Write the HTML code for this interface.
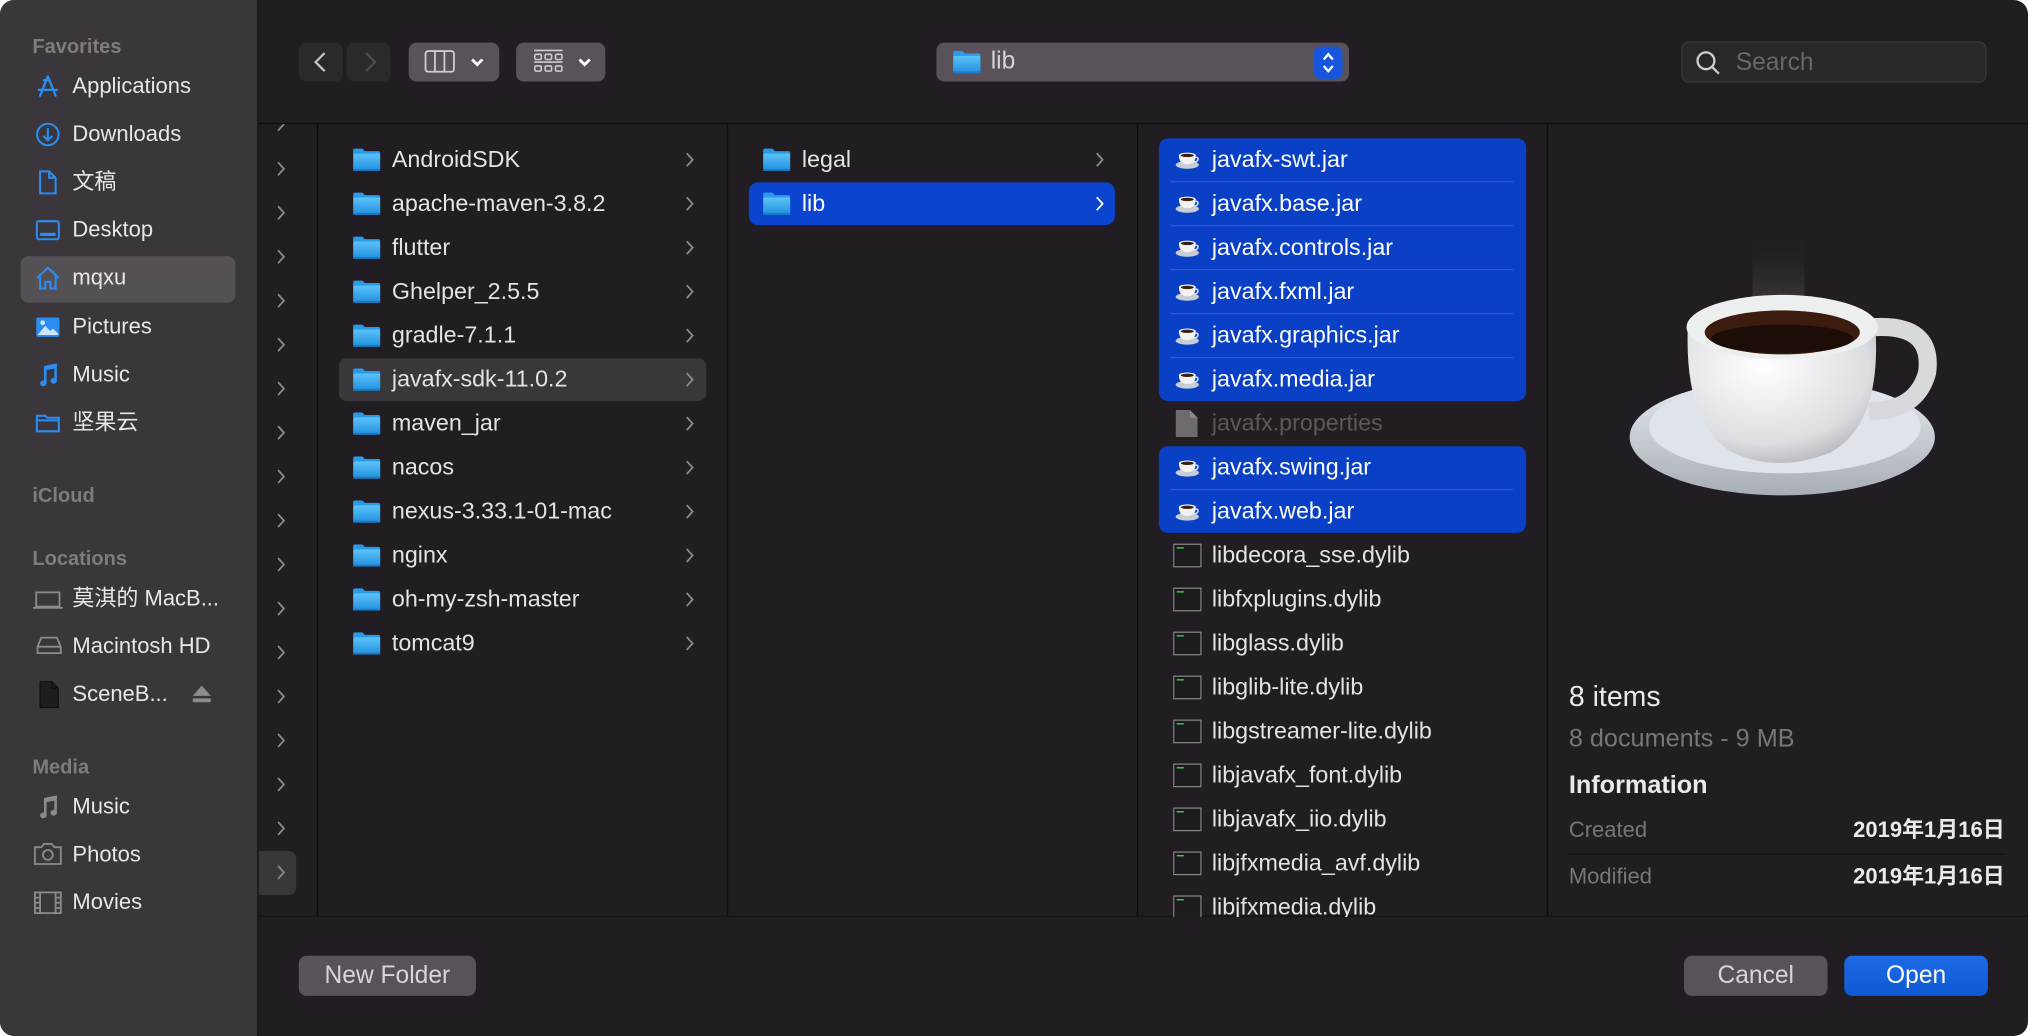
<!DOCTYPE html>
<html><head><meta charset="utf-8">
<style>
html,body{margin:0;padding:0;background:#fff;width:2028px;height:1036px;overflow:hidden}
#w{position:absolute;left:0;top:0;width:1568px;height:801px;transform:scale(1.29337);transform-origin:0 0;background:#211d23;border-radius:11px;overflow:hidden;font-family:"Liberation Sans","Noto Sans CJK SC",sans-serif;color:#e6e4e6}
.a{position:absolute}
#side{left:0;top:0;width:199px;height:801px;background:#3a363b;border-right:1px solid #0e0c0f}
.sh{position:absolute;left:25px;font-size:15.5px;font-weight:bold;color:#807b81}
.si{position:absolute;left:56px;font-size:17px;color:#e8e6e8;line-height:20px}
.ic{position:absolute;left:27px}
.row{position:absolute;height:34px;line-height:34px;font-size:18px;color:#e4e2e4;white-space:nowrap}
.fold{position:absolute;top:8px}
.vl{position:absolute;top:96px;height:612px;width:1px;background:#0e0c0f}
.btn{position:absolute;border-radius:6px;background:#5a525b;color:#d8d4d8;font-size:19px;text-align:center;line-height:31px;height:31px}
.sel{position:absolute;background:#0a40c5;border-radius:7px}
.sep{position:absolute;height:1px;background:#2c58d2}
.lv{position:absolute;line-height:20px;font-size:17px}
</style></head><body>
<div id="w">
<svg width="0" height="0" style="position:absolute"><defs>
<linearGradient id="fg" x1="0" y1="0" x2="0" y2="1"><stop offset="0" stop-color="#5cc3f7"/><stop offset="1" stop-color="#1f8fe0"/></linearGradient>
<symbol id="folder" viewBox="0 0 24 20"><path d="M1 2.5Q1 1 2.5 1H8.5L10.5 3H21.5Q23 3 23 4.5V6H1Z" fill="#2a9be8"/><rect x="1" y="5" width="22" height="14" rx="1.3" fill="url(#fg)"/><rect x="1" y="17.5" width="22" height="1.5" fill="#1a7cc8"/></symbol>
<symbol id="cup" viewBox="0 0 20 16"><ellipse cx="10" cy="12.5" rx="9" ry="3" fill="#c8ccd4"/><path d="M3.5 5Q3.5 12 10 12Q16.5 12 16.5 5Z" fill="#f2f2f2"/><path d="M16 6.5Q19 6.5 18 9Q17 10.5 15 10" stroke="#ddd" stroke-width="1.2" fill="none"/><ellipse cx="10" cy="5" rx="6.5" ry="2" fill="#f6f6f6"/><ellipse cx="10" cy="5.2" rx="5" ry="1.3" fill="#3a1e10"/></symbol>
<symbol id="dy" viewBox="0 0 24 20"><rect x="0.5" y="0.5" width="23" height="19" fill="#1c1c1c" stroke="#8a8a8a"/><rect x="3" y="3" width="6" height="1.2" fill="#3ad04a"/></symbol>
</defs></svg>

<div id="side" class="a">
<div class="sh" style="top:28px">Favorites</div>
<div class="a" style="left:16px;top:198px;width:166px;height:36px;background:#555056;border-radius:6px"></div>
<svg class="ic" style="top:57px" width="20" height="20" viewBox="0 0 20 20" fill="none" stroke="#2b8cf2" stroke-width="1.8" stroke-linecap="round"><path d="M10 2L4 17M10 2L16 17M3 12.5H17M7 5L11 5"/></svg>
<div class="si" style="top:57px">Applications</div>
<svg class="ic" style="top:94px" width="20" height="20" viewBox="0 0 20 20" fill="none" stroke="#2b8cf2" stroke-width="1.6"><circle cx="10" cy="10" r="8.3"/><path d="M10 5V14M6.5 11L10 14.5L13.5 11"/></svg>
<div class="si" style="top:94px">Downloads</div>
<svg class="ic" style="top:131px" width="20" height="20" viewBox="0 0 20 20" fill="none" stroke="#2b8cf2" stroke-width="1.6"><path d="M4 1.5H11L16 6.5V18.5H4Z M11 1.5V6.5H16"/></svg>
<div class="si" style="top:131px">文稿</div>
<svg class="ic" style="top:168px" width="20" height="20" viewBox="0 0 20 20" fill="none" stroke="#2b8cf2" stroke-width="1.6"><rect x="1.5" y="3" width="17" height="14" rx="1.5"/><rect x="4" y="12" width="12" height="2.5" fill="#2b8cf2" stroke="none"/></svg>
<div class="si" style="top:168px">Desktop</div>
<svg class="ic" style="top:205px" width="20" height="20" viewBox="0 0 20 20" fill="none" stroke="#2b8cf2" stroke-width="1.6"><path d="M1.5 10L10 2L18.5 10M4 8V18H8V13H12V18H16V8M14 4V6"/></svg>
<div class="si" style="top:205px">mqxu</div>
<svg class="ic" style="top:243px" width="20" height="20" viewBox="0 0 20 20"><rect x="1" y="2.5" width="18" height="15" rx="1.5" fill="#2b8cf2"/><path d="M2 16L8 9L12 13L14 11L18 15V16Z" fill="#cfe4ff"/><circle cx="6" cy="6.5" r="1.8" fill="#cfe4ff"/></svg>
<div class="si" style="top:243px">Pictures</div>
<svg class="ic" style="top:280px" width="20" height="20" viewBox="0 0 20 20" fill="#2b8cf2"><path d="M7 3L17 1V14.5A2.5 2.2 0 1 1 15 12.3V5L9 6.2V16.5A2.5 2.2 0 1 1 7 14.3Z"/></svg>
<div class="si" style="top:280px">Music</div>
<svg class="ic" style="top:317px" width="20" height="20" viewBox="0 0 20 20" fill="none" stroke="#2b8cf2" stroke-width="1.6"><path d="M1.5 4.5H8L9.5 6H18.5V16.5H1.5Z M1.5 8H18.5"/></svg>
<div class="si" style="top:317px">坚果云</div>

<div class="sh" style="top:375px">iCloud</div>
<div class="sh" style="top:424px">Locations</div>
<svg class="ic" style="top:455px;left:25px" width="24" height="18" viewBox="0 0 24 18" fill="none" stroke="#8d898e" stroke-width="1.4"><rect x="3" y="3" width="18" height="11"/><path d="M0.5 15H23.5"/></svg>
<div class="si" style="top:453px">莫淇的 MacB...</div>
<svg class="ic" style="top:491px;left:27px" width="22" height="16" viewBox="0 0 22 16" fill="none" stroke="#8d898e" stroke-width="1.4"><path d="M2 9L5 2H17L20 9V14H2Z M2 9H20"/></svg>
<div class="si" style="top:490px">Macintosh HD</div>
<svg class="ic" style="top:526px;left:30px" width="16" height="22" viewBox="0 0 16 22"><path d="M1 1H10L15 6V21H1Z" fill="#1e1c1f" stroke="#111" stroke-width="1"/><path d="M10 1V6H15" fill="none" stroke="#111"/></svg>
<div class="si" style="top:527px">SceneB...</div>
<svg class="a" style="left:148px;top:529px" width="16" height="15" viewBox="0 0 16 15" fill="#8d898e"><path d="M8 1L15 9H1Z"/><rect x="1" y="11" width="14" height="3" rx="1"/></svg>
<div class="sh" style="top:585px">Media</div>
<svg class="ic" style="top:614px" width="20" height="20" viewBox="0 0 20 20" fill="#8d898e"><path d="M7 3L17 1V14.5A2.5 2.2 0 1 1 15 12.3V5L9 6.2V16.5A2.5 2.2 0 1 1 7 14.3Z"/></svg>
<div class="si" style="top:614px">Music</div>
<svg class="ic" style="top:651px;left:26px" width="22" height="18" viewBox="0 0 22 18" fill="none" stroke="#8d898e" stroke-width="1.4"><path d="M1 4H6L8 1.5H14L16 4H21V17H1Z"/><circle cx="11" cy="10" r="3.8"/></svg>
<div class="si" style="top:651px">Photos</div>
<svg class="ic" style="top:689px;left:26px" width="22" height="18" viewBox="0 0 22 18" fill="none" stroke="#8d898e" stroke-width="1.4"><rect x="1" y="1" width="20" height="16"/><path d="M5 1V17M17 1V17M1 5H5M1 9H5M1 13H5M17 5H21M17 9H21M17 13H21"/></svg>
<div class="si" style="top:688px">Movies</div>
</div>

<div class="a" style="left:231px;top:33px;width:34px;height:30px;background:#2c292d;border-radius:6px"></div>
<svg class="a" style="left:241px;top:39px" width="14" height="18" viewBox="0 0 14 18" fill="none" stroke="#c9c6c9" stroke-width="1.7"><path d="M10 2L3 9L10 16"/></svg>
<div class="a" style="left:268px;top:33px;width:34px;height:30px;background:#2c292d;border-radius:6px"></div>
<svg class="a" style="left:279px;top:39px" width="14" height="18" viewBox="0 0 14 18" fill="none" stroke="#4f4c50" stroke-width="1.7"><path d="M4 2L11 9L4 16"/></svg>
<div class="a" style="left:316px;top:33px;width:70px;height:30px;background:#5a525b;border-radius:6px"></div>
<svg class="a" style="left:328px;top:38px" width="56" height="20" viewBox="0 0 56 20" fill="none" stroke="#cfcbcf" stroke-width="1.4"><rect x="1" y="1.5" width="22" height="16" rx="2"/><path d="M8.3 1.5V17.5M15.6 1.5V17.5"/><path d="M37 8L41 12L45 8" stroke="#fff" stroke-width="2.2"/></svg>
<div class="a" style="left:399px;top:33px;width:69px;height:30px;background:#5a525b;border-radius:6px"></div>
<svg class="a" style="left:412px;top:38px" width="52" height="20" viewBox="0 0 52 20" fill="none" stroke="#cfcbcf" stroke-width="1.2"><path d="M1 1H23M1 10H23"/><rect x="1.5" y="4" width="5" height="4" rx="1"/><rect x="9.5" y="4" width="5" height="4" rx="1"/><rect x="17.5" y="4" width="5" height="4" rx="1"/><rect x="1.5" y="13" width="5" height="4" rx="1"/><rect x="9.5" y="13" width="5" height="4" rx="1"/><rect x="17.5" y="13" width="5" height="4" rx="1"/><path d="M36 8L40 12L44 8" stroke="#fff" stroke-width="2.2"/></svg>

<div class="a" style="left:724px;top:33px;width:319px;height:30px;background:#5a525b;border-radius:6px"></div>
<svg class="a" style="left:736px;top:38px;width:23px;height:20px"><use href="#folder"/></svg>
<div class="a" style="left:766px;top:36px;font-size:19px;color:#d6d2d6;line-height:24px">lib</div>
<div class="a" style="left:1016px;top:36px;width:22px;height:25px;background:#1657de;border-radius:5px"></div>
<svg class="a" style="left:1020px;top:38px" width="14" height="21" viewBox="0 0 14 21" fill="none" stroke="#fff" stroke-width="1.8"><path d="M3.5 8L7 4L10.5 8M3.5 13L7 17L10.5 13"/></svg>

<div class="a" style="left:1300px;top:32px;width:234px;height:30px;background:#2a262b;border:1px solid #3a363b;border-radius:6px"></div>
<svg class="a" style="left:1310px;top:38px" width="22" height="22" viewBox="0 0 22 22" fill="none" stroke="#d0ccd0" stroke-width="1.8"><circle cx="9" cy="9" r="6.5"/><path d="M13.8 13.8L19 19"/></svg>
<div class="a" style="left:1342px;top:37px;font-size:19px;color:#6b666c;line-height:24px">Search</div>

<div class="a" style="left:200px;top:95px;width:1368px;height:1px;background:#0e0c0f"></div>
<div class="a" style="left:200px;top:708px;width:1368px;height:1px;background:#141215"></div>

<div class="vl" style="left:245px"></div>
<div class="vl" style="left:562px"></div>
<div class="vl" style="left:879px"></div>
<div class="vl" style="left:1196px"></div>

<div class="a" style="left:200px;top:658px;width:29px;height:34px;background:#3a363b;border-radius:0 6px 6px 0"></div>
<svg class="a" style="left:213px;top:96px" width="8" height="6" viewBox="0 0 8 6" fill="none" stroke="#8d8a8e" stroke-width="1.4"><path d="M6.5 0L2 5"/></svg>
<div id="c0"></div>

<div class="a" style="left:262px;top:277px;width:284px;height:33px;background:#3a363b;border-radius:6px"></div>
<div id="c1"></div>
<div class="sel" style="left:579px;top:141px;width:283px;height:33px;background:#0a44cf"></div>
<div id="c2"></div>
<div class="sel" style="left:896px;top:107px;width:284px;height:203px"></div>
<div class="sel" style="left:896px;top:345px;width:284px;height:67px"></div>
<div class="sep" style="left:905px;top:140px;width:265px"></div>
<div class="sep" style="left:905px;top:174px;width:265px"></div>
<div class="sep" style="left:905px;top:208px;width:265px"></div>
<div class="sep" style="left:905px;top:242px;width:265px"></div>
<div class="sep" style="left:905px;top:276px;width:265px"></div>
<div class="sep" style="left:905px;top:378px;width:265px"></div>
<div id="c3"></div>

<svg class="a" style="left:1250px;top:178px" width="260" height="230" viewBox="0 0 260 230">
<defs>
<radialGradient id="cg" cx="0.4" cy="0.3" r="0.8"><stop offset="0" stop-color="#ffffff"/><stop offset="0.7" stop-color="#dcdde0"/><stop offset="1" stop-color="#a9abb0"/></radialGradient>
<linearGradient id="sg" x1="0" y1="0" x2="0" y2="1"><stop offset="0" stop-color="#e7ebf0"/><stop offset="1" stop-color="#a8adb5"/></linearGradient>
<linearGradient id="st" x1="0" y1="0" x2="0" y2="1"><stop offset="0" stop-color="#211d23" stop-opacity="0"/><stop offset="1" stop-color="#4a464c"/></linearGradient>
</defs>
<rect x="105" y="0" width="40" height="55" fill="url(#st)" opacity="0.6"/>
<ellipse cx="128" cy="160" rx="118" ry="45" fill="url(#sg)"/>
<ellipse cx="130" cy="152" rx="105" ry="36" fill="#dfe3ea"/>
<path d="M198 75Q245 72 240 110Q232 140 195 140" stroke="#d8d9dc" stroke-width="14" fill="none"/>
<path d="M55 75Q52 150 90 172Q125 188 165 172Q205 150 200 75Z" fill="url(#cg)"/>
<ellipse cx="128" cy="75" rx="74" ry="25" fill="#eceef0"/>
<ellipse cx="128" cy="79" rx="60" ry="17" fill="#3b1c0e"/>
<ellipse cx="128" cy="84" rx="55" ry="11" fill="#1c0d07"/>
</svg>

<div class="a" style="left:1213px;top:526px;font-size:22px;color:#ece9ec">8 items</div>
<div class="a" style="left:1213px;top:560px;font-size:19.5px;color:#7a757b">8 documents - 9 MB</div>
<div class="a" style="left:1213px;top:596px;font-size:19.5px;font-weight:bold;color:#ece9ec">Information</div>
<div class="lv" style="left:1213px;top:632px;color:#7a757b">Created</div>
<div class="lv" style="left:1380px;top:632px;width:170px;text-align:right;font-weight:bold;color:#ece9ec">2019年1月16日</div>
<div class="a" style="left:1213px;top:660px;width:337px;height:1px;background:#151316"></div>
<div class="lv" style="left:1213px;top:668px;color:#7a757b">Modified</div>
<div class="lv" style="left:1380px;top:668px;width:170px;text-align:right;font-weight:bold;color:#ece9ec">2019年1月16日</div>

<div class="btn" style="left:231px;top:739px;width:137px">New Folder</div>
<div class="btn" style="left:1302px;top:739px;width:111px">Cancel</div>
<div class="btn" style="left:1426px;top:739px;width:111px;background:linear-gradient(#1d6ae6,#0f5ad4);color:#fff">Open</div>

<script>
function rows(id,x,chevX,items,opts){
 var h='';var st=opts.start;
 items.forEach(function(it,i){
  var c=st+i*34;var top=c-17;
  var icon=it.i||opts.icon;var col=it.c||'#e4e2e4';
  h+='<div class="row" style="left:'+x+'px;top:'+top+'px;color:'+col+'">';
  if(icon==='f')h+='<svg class="fold" style="left:0;width:23px;height:19px;top:8px"><use href="#folder"/></svg>';
  if(icon==='c')h+='<svg class="fold" style="left:2px;width:20px;height:16px;top:9px"><use href="#cup"/></svg>';
  if(icon==='d')h+='<svg class="fold" style="left:1px;width:22px;height:19px;top:8px"><use href="#dy"/></svg>';
  if(icon==='p')h+='<svg class="fold" style="left:3px;width:17px;height:21px;top:7px" viewBox="0 0 17 21"><path d="M0 0H11L17 6V21H0Z" fill="#6e6b6f"/><path d="M11 0V6H17" fill="#8a878b"/></svg>';
  h+='<span style="position:absolute;left:'+(opts.tx)+'px">'+it.t+'</span>';
  if(chevX)h+='<svg style="position:absolute;left:'+(chevX-x)+'px;top:11px" width="8" height="13" viewBox="0 0 8 13" fill="none" stroke="'+(it.cc||'#8d8a8e')+'" stroke-width="1.4"><path d="M2 1.5L6.5 6.5L2 11.5"/></svg>';
  h+='</div>';
 });
 document.getElementById(id).innerHTML=h;
}
var c0=[];for(var i=0;i<17;i++)c0.push({t:''});
rows('c0',200,213,c0,{start:130,tx:0,icon:''});
rows('c1',272,529,[{t:'AndroidSDK'},{t:'apache-maven-3.8.2'},{t:'flutter'},{t:'Ghelper_2.5.5'},{t:'gradle-7.1.1'},{t:'javafx-sdk-11.0.2'},{t:'maven_jar'},{t:'nacos'},{t:'nexus-3.33.1-01-mac'},{t:'nginx'},{t:'oh-my-zsh-master'},{t:'tomcat9'}],{start:123,tx:31,icon:'f'});
rows('c2',589,846,[{t:'legal'},{t:'lib',c:'#fff',cc:'#fff'}],{start:123,tx:31,icon:'f'});
rows('c3',906,0,[{t:'javafx-swt.jar',c:'#fff'},{t:'javafx.base.jar',c:'#fff'},{t:'javafx.controls.jar',c:'#fff'},{t:'javafx.fxml.jar',c:'#fff'},{t:'javafx.graphics.jar',c:'#fff'},{t:'javafx.media.jar',c:'#fff'},{t:'javafx.properties',c:'#5c585d',i:'p'},{t:'javafx.swing.jar',c:'#fff'},{t:'javafx.web.jar',c:'#fff'},{t:'libdecora_sse.dylib',i:'d'},{t:'libfxplugins.dylib',i:'d'},{t:'libglass.dylib',i:'d'},{t:'libglib-lite.dylib',i:'d'},{t:'libgstreamer-lite.dylib',i:'d'},{t:'libjavafx_font.dylib',i:'d'},{t:'libjavafx_iio.dylib',i:'d'},{t:'libjfxmedia_avf.dylib',i:'d'},{t:'libjfxmedia.dylib',i:'d'}],{start:123,tx:31,icon:'c'});
</script>
<div class="a" style="left:880px;top:709px;width:316px;height:10px;background:#211d23"></div>
</div>
</body></html>
